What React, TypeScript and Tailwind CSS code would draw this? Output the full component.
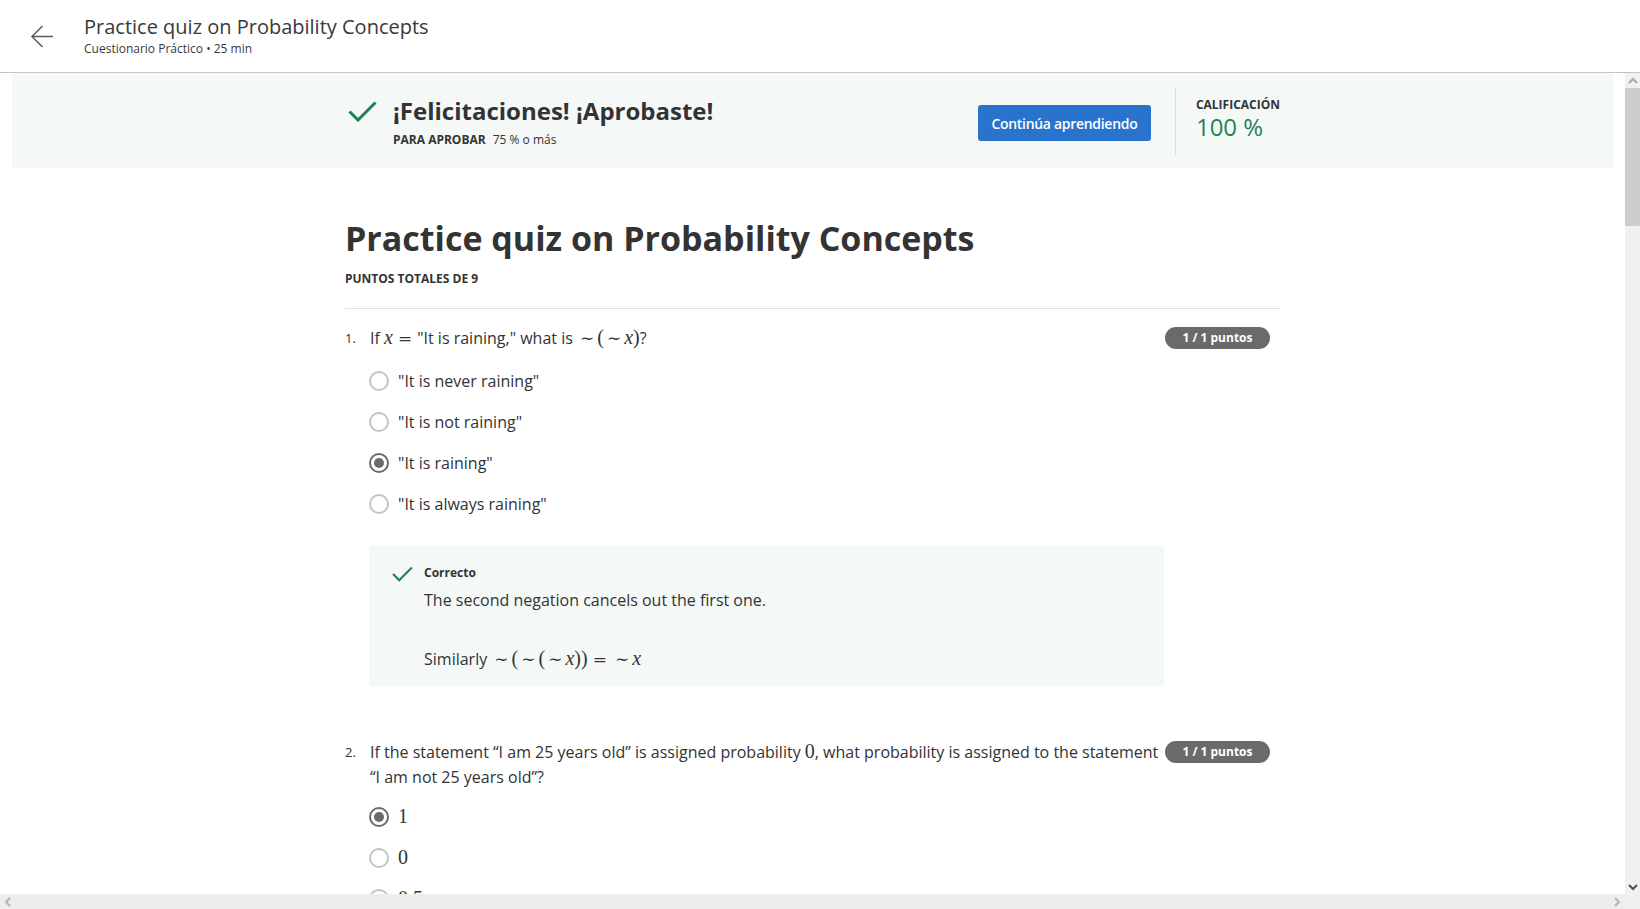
import React from "react";

function Check({ className }: { className?: string }) {
  return (
    <svg viewBox="0 0 29 21" className={className} fill="none">
      <path d="M1.5 10.5 L10 19 L27.5 1.5" stroke="#1f8354" strokeWidth="3" />
    </svg>
  );
}

function M({ children, italic }: { children: React.ReactNode; italic?: boolean }) {
  return (
    <span className={"font-['Liberation_Serif','DejaVu_Serif',serif] text-[20px] leading-none " + (italic ? "italic" : "")}>
      {children}
    </span>
  );
}

function Eq() {
  return <span className="mx-[5px] font-['DejaVu_Serif',serif] text-[17px] leading-none">=</span>;
}

function Tilde() {
  return <span className="mx-[3px] font-['DejaVu_Serif',serif] text-[17px] leading-none">∼</span>;
}

function Radio({ checked }: { checked?: boolean }) {
  return checked ? (
    <span className="flex h-[20px] w-[20px] shrink-0 items-center justify-center rounded-full border-2 border-[#6b6b6b]">
      <span className="h-[10px] w-[10px] rounded-full bg-[#6b6b6b]" />
    </span>
  ) : (
    <span className="h-[20px] w-[20px] shrink-0 rounded-full border-2 border-[#c4c4c4]" />
  );
}

function Option({ checked, children }: { checked?: boolean; children: React.ReactNode }) {
  return (
    <div className="flex h-[41px] items-center gap-[9px]">
      <Radio checked={checked} />
      <span className="text-[16px] text-[#333]">{children}</span>
    </div>
  );
}

function Badge() {
  return (
    <span className="mt-[1px] mr-[10px] flex h-[22px] w-[105px] shrink-0 items-center justify-center rounded-full bg-[#6a6a6a] text-[12px] font-bold text-white">
      1 / 1 puntos
    </span>
  );
}

export default function App() {
  return (
    <div className="flex h-screen flex-col overflow-hidden bg-white font-['Open_Sans',sans-serif] text-[#333]">
      <header className="flex h-[73px] shrink-0 items-center border-b border-[#c4c4c4] pl-[30px]">
        <svg viewBox="0 0 24 23" className="h-[23px] w-[24px]" fill="none">
          <path d="M23 11.5 H2 M12.5 1 L2 11.5 L12.5 22" stroke="#5a5a5a" strokeWidth="1.5" />
        </svg>
        <div className="mb-[1px] ml-[30px]">
          <div className="text-[20px] leading-[26px] text-[#373a3c]">Practice quiz on Probability Concepts</div>
          <div className="mt-[1px] text-[12px] leading-4 text-[#373a3c]">Cuestionario Práctico • 25 min</div>
        </div>
      </header>

      <div className="flex min-h-0 flex-1">
        <div className="flex min-w-0 flex-1 flex-col">
          <main className="min-h-0 flex-1 overflow-hidden">
            <section className="mx-[12px] h-[95px] bg-[#f4f9f7]">
              <div className="mx-auto flex h-full max-w-[935px] items-center justify-between">
                <div className="flex items-start pt-[3px]">
                  <Check className="ml-[3px] mt-[5px] h-[21px] w-[29px]" />
                  <div className="ml-[16px]">
                    <h1 className="text-[24px] font-bold leading-[30px] text-[#333]">¡Felicitaciones! ¡Aprobaste!</h1>
                    <p className="mt-[6px] text-[12px] leading-4 text-[#333]">
                      <span className="font-bold">PARA APROBAR</span>
                      <span className="ml-[7px]">75 % o más</span>
                    </p>
                  </div>
                </div>
                <div className="flex items-center">
                  <button
                    type="button"
                    className="mt-[5px] h-[36px] w-[173px] rounded-[3px] bg-[#2a73cc] text-[14px] font-semibold tracking-[-0.3px] text-white"
                  >
                    Continúa aprendiendo
                  </button>
                  <div className="ml-[24px] h-[68px] w-px bg-[#dcdcdc]" />
                  <div className="mb-[3px] ml-[20px]">
                    <div className="text-[12px] font-bold leading-4 text-[#333]">CALIFICACIÓN</div>
                    <div className="text-[24px] leading-[28px] text-[#1f8354]">100 %</div>
                  </div>
                </div>
              </div>
            </section>

            <div className="mx-auto max-w-[935px]">
              <h2 className="mt-[47px] text-[34px] font-bold leading-[46px] text-[#333]">
                Practice quiz on Probability Concepts
              </h2>
              <p className="mt-[10px] text-[12px] font-bold leading-4 text-[#333]">PUNTOS TOTALES DE 9</p>
              <div className="mt-[21px] border-t border-[#e1e1e1]" />

              <div className="mt-[17px] flex items-start">
                <span className="w-[25px] shrink-0 text-[13px] leading-[24px]">1.</span>
                <p className="flex-1 text-[16px] leading-[24px]">
                  If <M italic>x</M>
                  <Eq />
                  "It is raining," what is <Tilde />
                  <M>(</M>
                  <Tilde />
                  <M italic>x</M>
                  <M>)</M>?
                </p>
                <Badge />
              </div>

              <div className="ml-[24px] mt-[10px]">
                <Option>"It is never raining"</Option>
                <Option>"It is not raining"</Option>
                <Option checked>"It is raining"</Option>
                <Option>"It is always raining"</Option>
              </div>

              <div className="ml-[24px] mt-[22px] h-[140px] w-[795px] bg-[#f4f9f7] pl-[23px] pt-[19px]">
                <div className="flex items-start">
                  <Check className="mt-[1px] h-[16px] w-[21px]" />
                  <div className="ml-[11px]">
                    <div className="text-[12px] font-bold leading-4 text-[#333]">Correcto</div>
                    <p className="mt-[7px] text-[16px] leading-[24px]">The second negation cancels out the first one.</p>
                    <p className="mt-[35px] text-[16px] leading-[24px]">
                      Similarly <Tilde />
                      <M>(</M>
                      <Tilde />
                      <M>(</M>
                      <Tilde />
                      <M italic>x</M>
                      <M>))</M>
                      <Eq />
                      <Tilde />
                      <M italic>x</M>
                    </p>
                  </div>
                </div>
              </div>

              <div className="mt-[54px] flex items-start">
                <span className="w-[25px] shrink-0 text-[13px] leading-[25px]">2.</span>
                <p className="flex-1 pr-[6px] text-[16px] leading-[25px]">
                  If the statement “I am 25 years old” is assigned probability <M>0</M>, what probability is assigned to the
                  statement “I am not 25 years old”?
                </p>
                <Badge />
              </div>

              <div className="ml-[24px] mt-[6px]">
                <Option checked>
                  <M>1</M>
                </Option>
                <Option>
                  <M>0</M>
                </Option>
                <Option>
                  <M>0.5</M>
                </Option>
              </div>
            </div>
          </main>

          <div className="flex h-[15px] shrink-0 items-center justify-between bg-[#ededed] px-[4px]">
            <svg viewBox="0 0 8 10" className="h-[10px] w-[8px]" fill="none">
              <path d="M6 1 L2 5 L6 9" stroke="#b4b4b4" strokeWidth="2" />
            </svg>
            <svg viewBox="0 0 8 10" className="h-[10px] w-[8px]" fill="none">
              <path d="M2 1 L6 5 L2 9" stroke="#b4b4b4" strokeWidth="2" />
            </svg>
          </div>
        </div>

        <div className="flex w-[15px] shrink-0 flex-col bg-[#f0f0f0]">
          <div className="flex h-[15px] items-center justify-center">
            <svg viewBox="0 0 10 8" className="h-[8px] w-[10px]" fill="none">
              <path d="M1 6 L5 2 L9 6" stroke="#a8a8a8" strokeWidth="2" />
            </svg>
          </div>
          <div className="h-[138px] bg-[#cdcdcd]" />
          <div className="flex-1" />
          <div className="mb-[15px] flex h-[15px] items-center justify-center">
            <svg viewBox="0 0 10 8" className="h-[8px] w-[10px]" fill="none">
              <path d="M1 2 L5 6 L9 2" stroke="#505050" strokeWidth="2" />
            </svg>
          </div>
        </div>
      </div>
    </div>
  );
}
